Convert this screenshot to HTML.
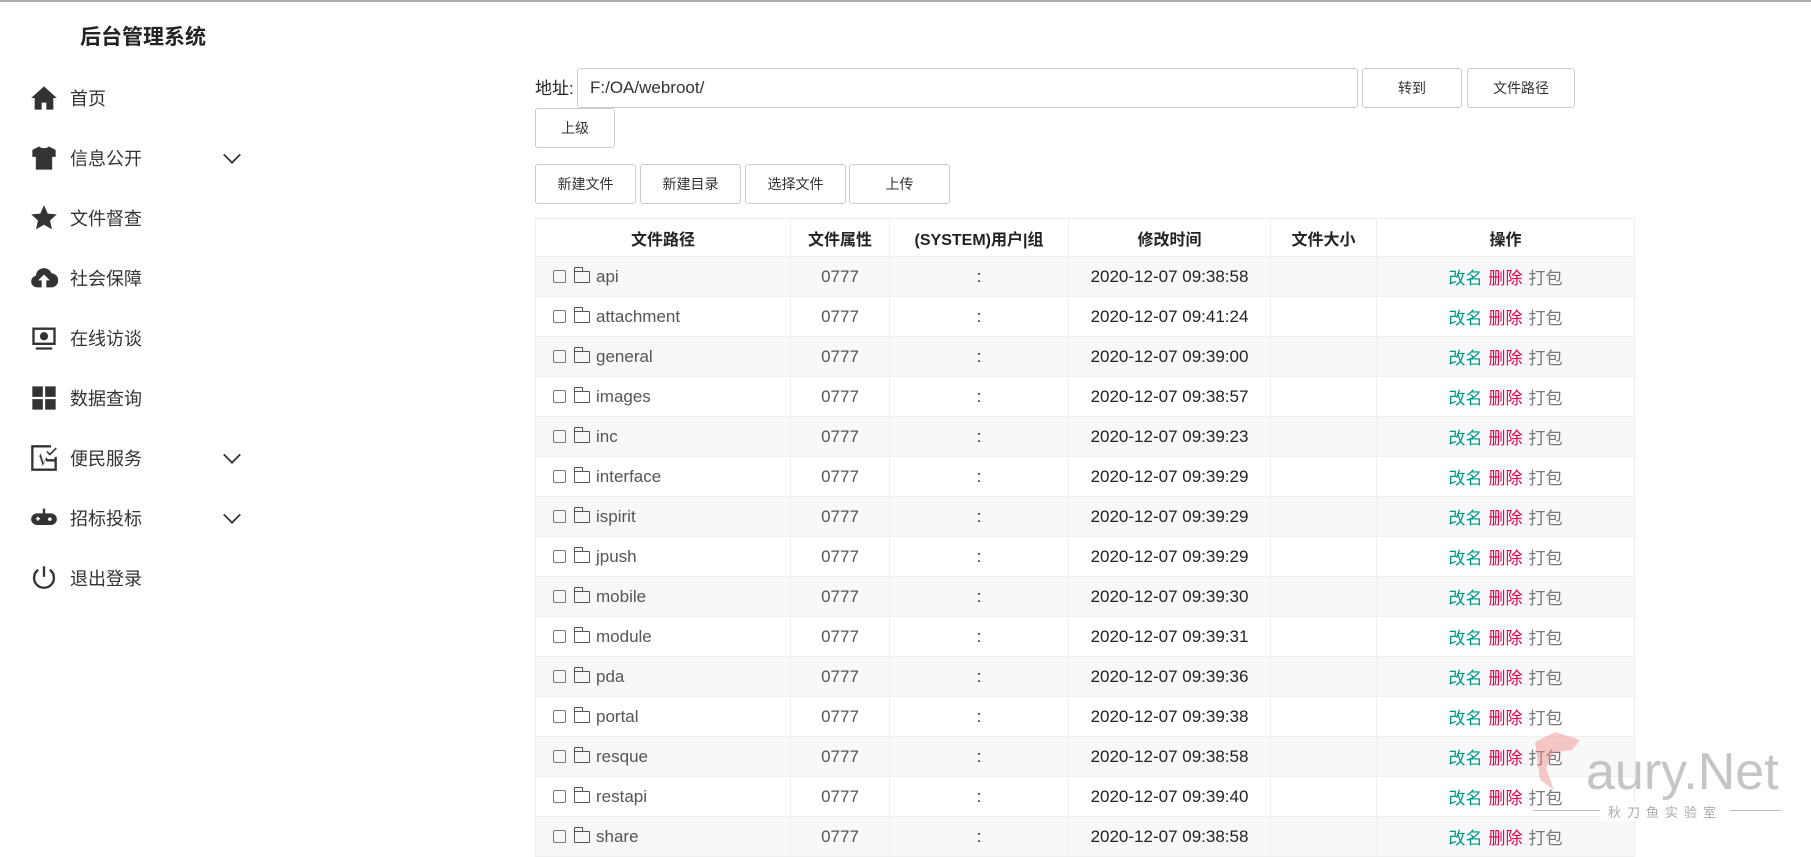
<!DOCTYPE html>
<html><head><meta charset="utf-8"><style>
*{margin:0;padding:0;box-sizing:border-box}
body{width:1811px;height:846px;overflow:hidden;background:#fff;font-family:"Liberation Sans","Noto Sans CJK SC",sans-serif;color:#333;border-top:2px solid #aaa;position:relative}
.title{position:absolute;left:80px;top:19px;font-size:21px;font-weight:bold;color:#222}
.nav{position:absolute;left:30px;top:66px}
.item{height:60px;display:flex;align-items:center;font-size:18px;color:#333;width:220px;position:relative}
.item svg{width:28px;height:28px;margin-right:12px;fill:#333}
.item .arr{position:absolute;left:195px;top:20px;width:14px;height:14px;border-right:2px solid #333;border-bottom:2px solid #333;transform:rotate(45deg) scale(.9);margin:0}
.btn{position:absolute;border:1px solid #ccc;border-radius:3px;background:#fff;font-size:14px;color:#333;display:flex;align-items:center;justify-content:center}
table{position:absolute;left:535px;top:216px;width:1100px;border-collapse:collapse;font-size:17px}
td,th{border:1px solid #eee;height:40px;text-align:center;color:#555}
th{height:38px;font-weight:bold;color:#222;font-size:16px}
tr:nth-child(even) td{background:#f8f8f8}
td.p{text-align:left;padding-left:17px;color:#555}
.cb{display:inline-block;width:13px;height:13px;border:1px solid #777;border-radius:2px;vertical-align:-1px;margin-right:8px}
.fd{display:inline-block;width:16px;height:12px;border:1.5px solid #555;border-radius:1px;vertical-align:-1px;margin-right:6px;position:relative}
.fd:before{content:"";position:absolute;left:-1.5px;top:-5px;width:7px;height:4px;border:1.5px solid #555;border-bottom:none;border-radius:1px 1px 0 0}
td.t{color:#222}
.g{color:#009688}.r{color:#e5004f}.k{color:#777}
.op span{margin:0 3px}
</style></head><body>
<div class="title">后台管理系统</div>
<div class="nav">
<div class="item"><svg viewBox="0 0 24 24"><path d="M12 2 1 12h3v10h6v-6h4v6h6V12h3z"/></svg>首页</div>
<div class="item"><svg viewBox="0 0 24 24"><path d="M8 2 2 5v6h3v11h14V11h3V5l-6-3c-1 2-7 2-8 0z"/></svg>信息公开<span class="arr"></span></div>
<div class="item"><svg viewBox="0 0 24 24"><path d="M12 1l3.2 7.2 7.8.7-5.9 5.2 1.8 7.7L12 17.8 5.1 21.8l1.8-7.7L1 8.9l7.8-.7z"/></svg>文件督查</div>
<div class="item"><svg viewBox="0 0 24 24"><path d="M6 20a5 5 0 0 1-1-9.9A7 7 0 0 1 18.5 8 6 6 0 0 1 18 20h-4v-6h3l-5-5-5 5h3v6z"/></svg>社会保障</div>
<div class="item"><svg viewBox="0 0 24 24"><path fill-rule="evenodd" d="M2 3h20v15H2zM4 5v11h16V5zM5 20h14v2H5z"/><circle cx="12" cy="10.5" r="3.5"/></svg>在线访谈</div>
<div class="item"><svg viewBox="0 0 24 24"><path d="M2 2h9v9H2zM13 2h9v9h-9zM2 13h9v9H2zM13 13h9v9h-9z"/></svg>数据查询</div>
<div class="item"><svg viewBox="0 0 24 24"><path d="M1 1h17v2H3v18h18V11h2v12H1z"/><path d="M3 13h4l2-5 3 9 2-6 1 2h6v2h-7l-1-2-2 6-3-9-1 3H3z"/><path d="M15 6l2 2 5-5 1 1-6 6-3-3z"/></svg>便民服务<span class="arr"></span></div>
<div class="item"><svg viewBox="0 0 24 24"><path d="M11 4h2v4h5a5 5 0 0 1 0 10H6A5 5 0 0 1 6 8h5z"/><path fill="#fff" d="M5 12h1.2v-1.2h1.2V12h1.2v1.2H7.4v1.2H6.2v-1.2H5z"/><circle fill="#fff" cx="17" cy="13" r="1.5"/></svg>招标投标<span class="arr"></span></div>
<div class="item"><svg viewBox="0 0 24 24" style="fill:none;stroke:#333;stroke-width:2"><path d="M12 2v9"/><path d="M7 5a8.5 8.5 0 1 0 10 0"/></svg>退出登录</div>
</div>
<div style="position:absolute;left:535px;top:72px;font-size:17px;color:#222">地址:</div>
<div class="btn" style="left:577px;top:66px;width:781px;height:40px;justify-content:flex-start;padding-left:12px;font-size:17px;color:#333">F:/OA/webroot/</div>
<div class="btn" style="left:1362px;top:66px;width:100px;height:40px">转到</div>
<div class="btn" style="left:1467px;top:66px;width:108px;height:40px">文件路径</div>
<div class="btn" style="left:535px;top:106px;width:80px;height:40px">上级</div>
<div class="btn" style="left:535px;top:162px;width:101px;height:40px">新建文件</div>
<div class="btn" style="left:640px;top:162px;width:101px;height:40px">新建目录</div>
<div class="btn" style="left:745px;top:162px;width:101px;height:40px">选择文件</div>
<div class="btn" style="left:849px;top:162px;width:101px;height:40px">上传</div>
<table>
<tr><th style="width:255px">文件路径</th><th style="width:99px">文件属性</th><th style="width:179px">(SYSTEM)用户|组</th><th style="width:202px">修改时间</th><th style="width:106px">文件大小</th><th>操作</th></tr>
<tr><td class="p"><span class="cb"></span><span class="fd"></span>api</td><td>0777</td><td class="t">:</td><td class="t">2020-12-07 09:38:58</td><td></td><td class="op"><span class="g">改名</span><span class="r">删除</span><span class="k">打包</span></td></tr>
<tr><td class="p"><span class="cb"></span><span class="fd"></span>attachment</td><td>0777</td><td class="t">:</td><td class="t">2020-12-07 09:41:24</td><td></td><td class="op"><span class="g">改名</span><span class="r">删除</span><span class="k">打包</span></td></tr>
<tr><td class="p"><span class="cb"></span><span class="fd"></span>general</td><td>0777</td><td class="t">:</td><td class="t">2020-12-07 09:39:00</td><td></td><td class="op"><span class="g">改名</span><span class="r">删除</span><span class="k">打包</span></td></tr>
<tr><td class="p"><span class="cb"></span><span class="fd"></span>images</td><td>0777</td><td class="t">:</td><td class="t">2020-12-07 09:38:57</td><td></td><td class="op"><span class="g">改名</span><span class="r">删除</span><span class="k">打包</span></td></tr>
<tr><td class="p"><span class="cb"></span><span class="fd"></span>inc</td><td>0777</td><td class="t">:</td><td class="t">2020-12-07 09:39:23</td><td></td><td class="op"><span class="g">改名</span><span class="r">删除</span><span class="k">打包</span></td></tr>
<tr><td class="p"><span class="cb"></span><span class="fd"></span>interface</td><td>0777</td><td class="t">:</td><td class="t">2020-12-07 09:39:29</td><td></td><td class="op"><span class="g">改名</span><span class="r">删除</span><span class="k">打包</span></td></tr>
<tr><td class="p"><span class="cb"></span><span class="fd"></span>ispirit</td><td>0777</td><td class="t">:</td><td class="t">2020-12-07 09:39:29</td><td></td><td class="op"><span class="g">改名</span><span class="r">删除</span><span class="k">打包</span></td></tr>
<tr><td class="p"><span class="cb"></span><span class="fd"></span>jpush</td><td>0777</td><td class="t">:</td><td class="t">2020-12-07 09:39:29</td><td></td><td class="op"><span class="g">改名</span><span class="r">删除</span><span class="k">打包</span></td></tr>
<tr><td class="p"><span class="cb"></span><span class="fd"></span>mobile</td><td>0777</td><td class="t">:</td><td class="t">2020-12-07 09:39:30</td><td></td><td class="op"><span class="g">改名</span><span class="r">删除</span><span class="k">打包</span></td></tr>
<tr><td class="p"><span class="cb"></span><span class="fd"></span>module</td><td>0777</td><td class="t">:</td><td class="t">2020-12-07 09:39:31</td><td></td><td class="op"><span class="g">改名</span><span class="r">删除</span><span class="k">打包</span></td></tr>
<tr><td class="p"><span class="cb"></span><span class="fd"></span>pda</td><td>0777</td><td class="t">:</td><td class="t">2020-12-07 09:39:36</td><td></td><td class="op"><span class="g">改名</span><span class="r">删除</span><span class="k">打包</span></td></tr>
<tr><td class="p"><span class="cb"></span><span class="fd"></span>portal</td><td>0777</td><td class="t">:</td><td class="t">2020-12-07 09:39:38</td><td></td><td class="op"><span class="g">改名</span><span class="r">删除</span><span class="k">打包</span></td></tr>
<tr><td class="p"><span class="cb"></span><span class="fd"></span>resque</td><td>0777</td><td class="t">:</td><td class="t">2020-12-07 09:38:58</td><td></td><td class="op"><span class="g">改名</span><span class="r">删除</span><span class="k">打包</span></td></tr>
<tr><td class="p"><span class="cb"></span><span class="fd"></span>restapi</td><td>0777</td><td class="t">:</td><td class="t">2020-12-07 09:39:40</td><td></td><td class="op"><span class="g">改名</span><span class="r">删除</span><span class="k">打包</span></td></tr>
<tr><td class="p"><span class="cb"></span><span class="fd"></span>share</td><td>0777</td><td class="t">:</td><td class="t">2020-12-07 09:38:58</td><td></td><td class="op"><span class="g">改名</span><span class="r">删除</span><span class="k">打包</span></td></tr>
</table>
<svg style="position:absolute;left:1530px;top:728px" width="60" height="70" viewBox="0 0 60 70"><path d="M5 12 25 2l25 8-8 10-18 2-8 16 8 22-14-10z" fill="#e88" opacity=".45"/></svg>
<div style="position:absolute;left:1586px;top:740px;font-size:52px;color:#bbb;opacity:.85;font-family:'Liberation Sans',sans-serif">aury.Net</div>
<div style="position:absolute;left:1533px;top:808px;width:248px;border-top:1px solid #bbb"></div>
<div style="position:absolute;left:1600px;top:800px;background:#fff;padding:0 8px;font-size:13px;color:#aaa;letter-spacing:6px">秋刀鱼实验室</div>
</body></html>
